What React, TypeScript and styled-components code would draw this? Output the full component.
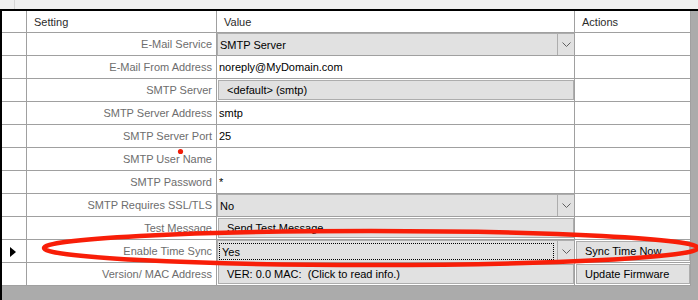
import React from "react";
import styled, { createGlobalStyle, css } from "styled-components";

const GlobalStyle = createGlobalStyle`
  html, body { margin: 0; padding: 0; }
  body {
    background: #ababab;
    font-family: "Liberation Sans", Arial, sans-serif;
    font-size: 11px;
  }
`;

const Page = styled.div`
  position: relative;
  width: 698px;
  height: 300px;
  overflow: hidden;
  background: #ababab;
`;

const TopBand = styled.div`
  height: 9px;
  background: #f0f0f0;
  display: flex;
`;

const TopTab = styled.div`
  width: 14px;
  border-right: 1px solid #d6d6d6;
`;

const Frame = styled.div`
  border-top: 2px solid #000;
  border-left: 2px solid #000;
  height: 289px;
  display: flex;
  align-items: flex-start;
`;

const Grid = styled.div`
  display: grid;
  grid-template-columns: 25px 190px 358px 116px;
  grid-auto-rows: 23px;
  grid-template-rows: 22px;
  background: #fff;
`;

const Cell = styled.div<{ $align?: "left" | "right" }>`
  box-sizing: border-box;
  border-right: 1px solid #a0a0a0;
  border-bottom: 1px solid #a0a0a0;
  display: flex;
  align-items: center;
  min-width: 0;
  white-space: pre;
  overflow: hidden;
  justify-content: ${(p) => (p.$align === "right" ? "flex-end" : "flex-start")};
`;

const HeaderCell = styled(Cell)`
  color: #2b2b2b;
  padding-left: 7px;
`;

const RowHeader = styled(Cell)`
  padding-left: 8px;
`;

const CurrentMark = styled.span`
  width: 0;
  height: 0;
  border-left: 6px solid #000;
  border-top: 5px solid transparent;
  border-bottom: 5px solid transparent;
  margin-top: 1px;
`;

const Label = styled(Cell)`
  color: #6d6d6d;
  padding-right: 4px;
`;

const TextValue = styled(Cell)`
  color: #000;
  padding-left: 2px;
`;

const boxLook = css`
  box-sizing: border-box;
  background: #e1e1e1;
  border: 1px solid #adadad;
`;

const ComboCell = styled(Cell)`
  ${boxLook};
  border-right: 1px solid #a0a0a0;
  border-bottom: 1px solid #a0a0a0;
  padding: 0;
  align-items: stretch;
`;

const ComboText = styled.div<{ $focused?: boolean }>`
  flex: 1;
  display: flex;
  align-items: center;
  padding-left: 2px;
  color: #000;
  box-sizing: border-box;
  ${(p) =>
    p.$focused &&
    css`
      margin: 2px 3px 2px 1px;
      padding-left: 2px;
      border: 1px dotted #000;
    `}
`;

const DropButton = styled.div`
  width: 16px;
  border-left: 1px solid #adadad;
  display: flex;
  align-items: center;
  justify-content: center;
`;

const ButtonCell = styled(Cell)`
  padding: 1px 0 1px 1px;
  align-items: stretch;
`;

const GridButton = styled.div`
  ${boxLook};
  flex: 1;
  display: flex;
  align-items: center;
  padding-left: 8px;
  color: #000;
  white-space: pre;
`;

const Overlay = styled.svg`
  position: absolute;
  left: 0;
  top: 0;
  pointer-events: none;
`;

const Chevron = () => (
  <svg width="9" height="5" viewBox="0 0 9 5">
    <path d="M0.5 0.5 L4.5 4.5 L8.5 0.5" fill="none" stroke="#606060" strokeWidth="1" />
  </svg>
);

type Kind = "text" | "combo" | "button";
type Row = {
  label: string;
  kind: Kind;
  value: string;
  action?: string;
  current?: boolean;
  focused?: boolean;
};

const rows: Row[] = [
  { label: "E-Mail Service", kind: "combo", value: "SMTP Server" },
  { label: "E-Mail From Address", kind: "text", value: "noreply@MyDomain.com" },
  { label: "SMTP Server", kind: "button", value: "<default> (smtp)" },
  { label: "SMTP Server Address", kind: "text", value: "smtp" },
  { label: "SMTP Server Port", kind: "text", value: "25" },
  { label: "SMTP User Name", kind: "text", value: "" },
  { label: "SMTP Password", kind: "text", value: "*" },
  { label: "SMTP Requires SSL/TLS", kind: "combo", value: "No" },
  { label: "Test Message", kind: "button", value: "Send Test Message" },
  {
    label: "Enable Time Sync",
    kind: "combo",
    value: "Yes",
    action: "Sync Time Now",
    current: true,
    focused: true,
  },
  {
    label: "Version/ MAC Address",
    kind: "button",
    value: "VER: 0.0 MAC:  (Click to read info.)",
    action: "Update Firmware",
  },
];

const ValueCell = ({ row }: { row: Row }) => {
  if (row.kind === "combo") {
    return (
      <ComboCell>
        <ComboText $focused={row.focused}>{row.value}</ComboText>
        <DropButton>
          <Chevron />
        </DropButton>
      </ComboCell>
    );
  }
  if (row.kind === "button") {
    return (
      <ButtonCell>
        <GridButton>{row.value}</GridButton>
      </ButtonCell>
    );
  }
  return <TextValue>{row.value}</TextValue>;
};

export default function App() {
  return (
    <>
      <GlobalStyle />
      <Page>
        <TopBand>
          <TopTab />
        </TopBand>
        <Frame>
          <Grid>
            <HeaderCell />
            <HeaderCell>Setting</HeaderCell>
            <HeaderCell>Value</HeaderCell>
            <HeaderCell>Actions</HeaderCell>
            {rows.map((r) => (
              <React.Fragment key={r.label}>
                <RowHeader>{r.current && <CurrentMark />}</RowHeader>
                <Label $align="right">{r.label}</Label>
                <ValueCell row={r} />
                {r.action ? (
                  <ButtonCell>
                    <GridButton>{r.action}</GridButton>
                  </ButtonCell>
                ) : (
                  <Cell />
                )}
              </React.Fragment>
            ))}
          </Grid>
        </Frame>
        <Overlay width="698" height="300" viewBox="0 0 698 300">
          <circle cx="180.5" cy="151.5" r="2.6" fill="#f01e0a" />
          <ellipse
            cx="371"
            cy="248"
            rx="327"
            ry="17"
            fill="none"
            stroke="#f81e08"
            strokeWidth="4.5"
          />
        </Overlay>
      </Page>
    </>
  );
}
